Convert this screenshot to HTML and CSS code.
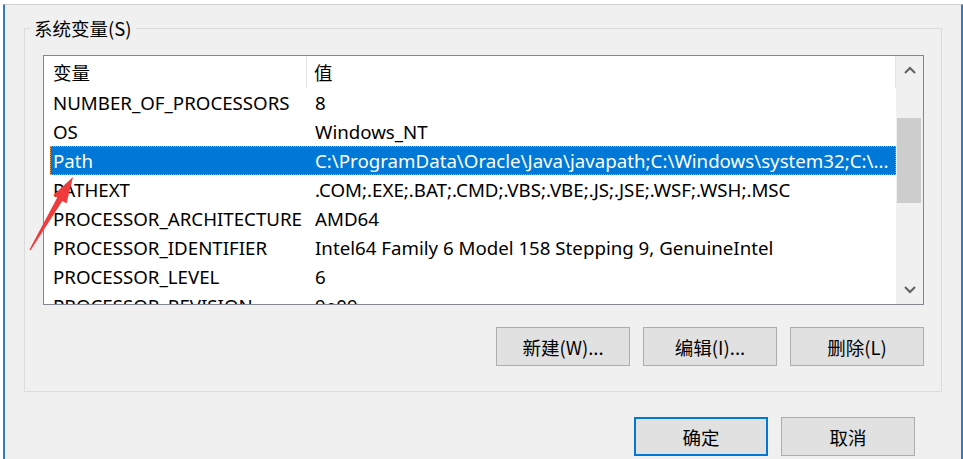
FILE: index.html
```html
<!DOCTYPE html>
<html lang="zh-CN">
<head>
<meta charset="utf-8">
<title>系统变量</title>
<link rel="stylesheet" href="styles.css">
</head>
<body>
<div class="window">
  <div class="group">
    <span class="group-title">系统变量(S)</span>
    <div class="list">
      <div class="list-main">
        <div class="list-header">
          <div class="hcell c1">变量</div>
          <div class="hcell c2">值</div>
        </div>
        <div class="rows">
          <div class="row"><span class="c1">NUMBER_OF_PROCESSORS</span><span class="c2">8</span></div>
          <div class="row"><span class="c1">OS</span><span class="c2">Windows_NT</span></div>
          <div class="row selected"><span class="c1">Path</span><span class="c2">C:\ProgramData\Oracle\Java\javapath;C:\Windows\system32;C:\...</span></div>
          <div class="row"><span class="c1">PATHEXT</span><span class="c2">.COM;.EXE;.BAT;.CMD;.VBS;.VBE;.JS;.JSE;.WSF;.WSH;.MSC</span></div>
          <div class="row"><span class="c1">PROCESSOR_ARCHITECTURE</span><span class="c2">AMD64</span></div>
          <div class="row"><span class="c1">PROCESSOR_IDENTIFIER</span><span class="c2">Intel64 Family 6 Model 158 Stepping 9, GenuineIntel</span></div>
          <div class="row"><span class="c1">PROCESSOR_LEVEL</span><span class="c2">6</span></div>
          <div class="row"><span class="c1">PROCESSOR_REVISION</span><span class="c2">9e09</span></div>
        </div>
      </div>
      <div class="scrollbar">
        <div class="sb-btn">
          <svg width="12" height="8" viewBox="0 0 12 8"><path d="M1 7 L6 2 L11 7" fill="none" stroke="#606060" stroke-width="2"/></svg>
        </div>
        <div class="sb-track"><div class="sb-thumb" style="margin-top:34px;height:85px"></div></div>
        <div class="sb-btn">
          <svg width="12" height="8" viewBox="0 0 12 8"><path d="M1 1 L6 6 L11 1" fill="none" stroke="#606060" stroke-width="2"/></svg>
        </div>
      </div>
    </div>
    <div class="btn-row">
      <button class="btn">新建(W)...</button>
      <button class="btn">编辑(I)...</button>
      <button class="btn">删除(L)</button>
    </div>
  </div>
  <div class="dialog-buttons">
    <button class="btn default">确定</button>
    <button class="btn">取消</button>
  </div>
</div>
<svg class="annotation" width="963" height="459" viewBox="0 0 963 459">
  <polygon points="73,177 66.5,203.5 62.3,201 30.6,250.3 29.4,249.7 57.3,197.6 53.2,195.3" fill="#ef3b3b"/>
</svg>
</body>
</html>
```

FILE: styles.css
```css
* { box-sizing: border-box; }

html, body {
  margin: 0;
  padding: 0;
  background: #ffffff;
  width: 963px;
  height: 459px;
  overflow: hidden;
}

body {
  position: relative;
  font-family: "Noto Sans", "Noto Sans CJK SC", sans-serif;
  font-size: 18.7px;
  color: #000;
}

.window {
  margin: 4px 0 0 3px;
  width: 960px;
  height: 455px;
  background: #f0f0f0;
  border-top: 1px solid #cfcfcf;
  border-left: 2px solid #2f7cc6;
  border-right: 2px solid #2f7cc6;
  display: flex;
  flex-direction: column;
  align-items: flex-start;
  padding: 23px 0 0 19px;
}

.group {
  position: relative;
  width: 918px;
  height: 364px;
  border: 1px solid #dcdcdc;
  padding: 26px 0 0 18px;
  display: flex;
  flex-direction: column;
}

.group-title {
  position: absolute;
  left: 5px;
  top: -13px;
  padding: 0 4px;
  background: #f0f0f0;
  font-family: "Noto Sans CJK SC", sans-serif;
  font-size: 18.5px;
  line-height: 24px;
}

.list {
  width: 881px;
  height: 250px;
  border: 1px solid #828790;
  background: #fff;
  display: flex;
  overflow: hidden;
}

.list-main {
  width: 852px;
  display: flex;
  flex-direction: column;
  overflow: hidden;
}

.list-header {
  height: 32px;
  display: flex;
  flex: none;
}

.hcell {
  display: flex;
  align-items: center;
  font-family: "Noto Sans CJK SC", sans-serif;
  font-size: 18.5px;
  border-right: 1px solid #e5e5e5;
}

.hcell.c1 { width: 263px; padding-left: 9px; }
.hcell.c2 { flex: 1; padding-left: 7px; }

.rows {
  padding-left: 6px;
  display: flex;
  flex-direction: column;
}

.row {
  height: 29px;
  flex: none;
  display: flex;
  align-items: center;
  white-space: nowrap;
  overflow: hidden;
}

.row .c1 { width: 262px; padding-left: 3px; flex: none; }
.row .c2 { padding-left: 3px; }

.row.selected {
  background: #0078d7;
  color: #fff;
  outline: 1px dotted #e79a4c;
  outline-offset: -1px;
}

.scrollbar {
  width: 27px;
  flex: none;
  background: #f0f0f0;
  display: flex;
  flex-direction: column;
}

.sb-btn {
  height: 28px;
  flex: none;
  display: flex;
  align-items: center;
  justify-content: center;
  padding-left: 1px;
}

.sb-track {
  flex: 1;
  padding: 0 2px 0 1px;
}

.sb-thumb {
  background: #cdcdcd;
}

.btn-row {
  display: flex;
  justify-content: flex-end;
  gap: 13px;
  width: 881px;
  margin-top: 22px;
}

.btn {
  width: 134px;
  height: 39px;
  background: #e1e1e1;
  border: 1px solid #adadad;
  font-family: "Noto Sans CJK SC", sans-serif;
  font-size: 18.5px;
  color: #000;
  padding: 0;
  margin: 0;
}

.btn.default {
  border: 2px solid #0078d7;
}

.dialog-buttons {
  display: flex;
  gap: 13px;
  margin: 25px 0 0 610px;
}

.annotation {
  position: absolute;
  left: 0;
  top: 0;
  pointer-events: none;
}
```
